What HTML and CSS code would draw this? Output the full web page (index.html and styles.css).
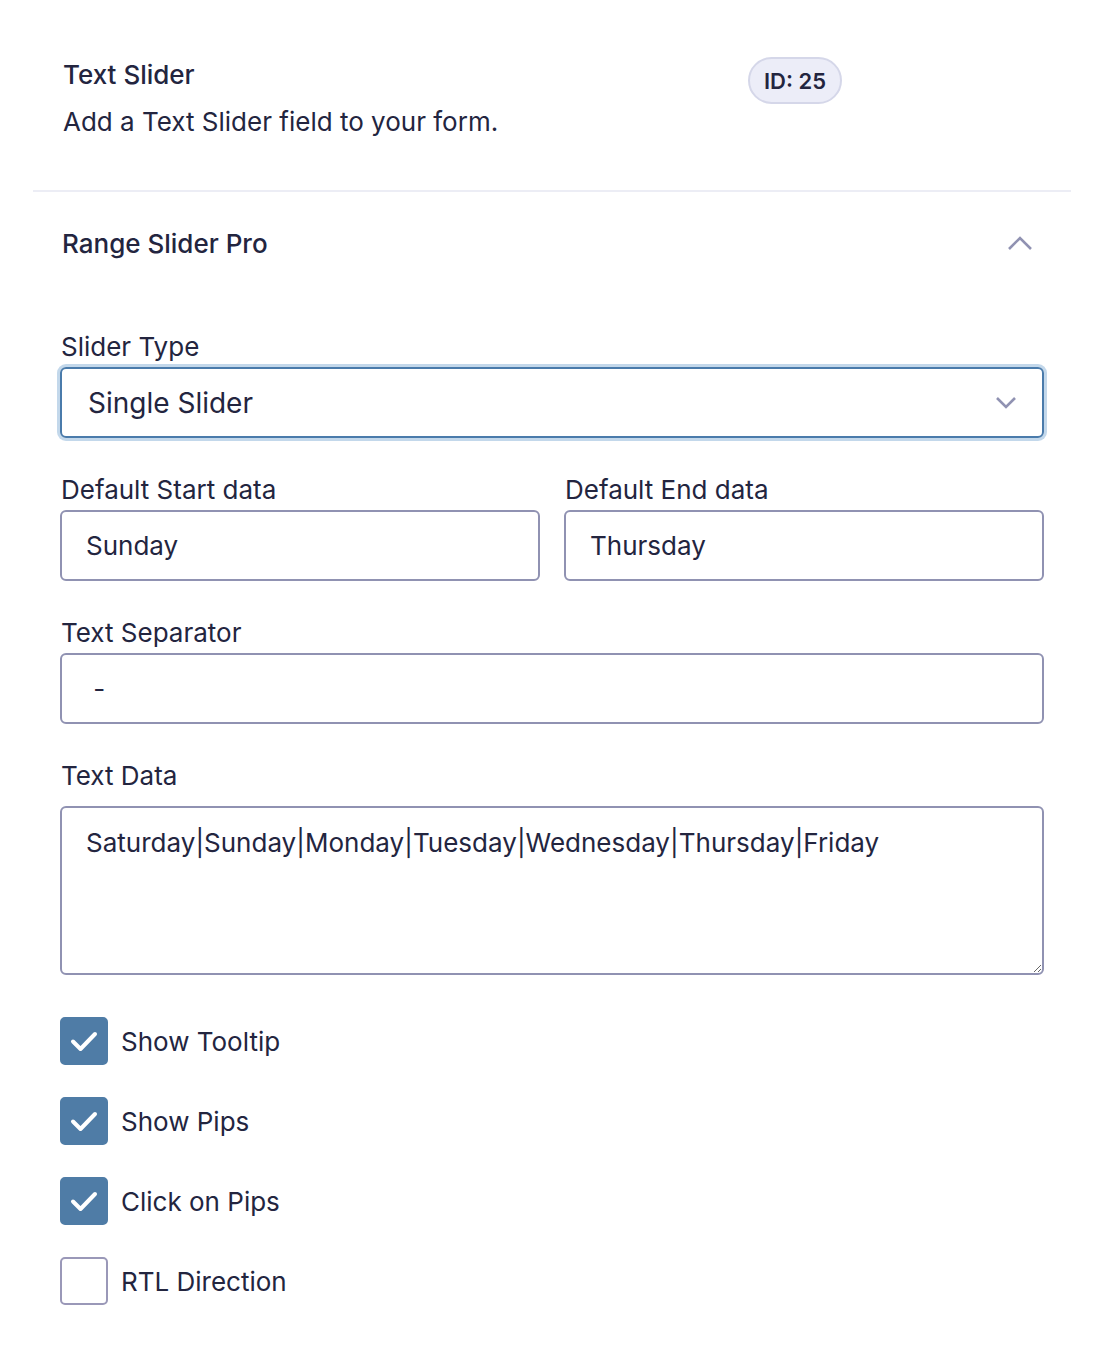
FILE: index.html
```html
<!DOCTYPE html>
<html lang="en">
<head>
<meta charset="utf-8">
<title>Text Slider</title>
<link rel="stylesheet" href="styles.css">
</head>
<body>
<div class="panel">
  <div class="field-head">
    <div class="field-info">
      <div class="field-title">Text Slider</div>
      <div class="field-desc">Add a Text Slider field to your form.</div>
    </div>
    <div class="badge">ID: 25</div>
  </div>
  <div class="section">
    <div class="section-head">
      <span class="section-title">Range Slider Pro</span>
      <svg class="chev-up" width="26" height="16" viewBox="0 0 26 16"><path d="M2 14 L13 3 L24 14" fill="none" stroke="#9092b2" stroke-width="2.6"/></svg>
    </div>
    <div class="section-body">
      <div class="field">
        <label class="label">Slider Type</label>
        <div class="select">
          <span>Single Slider</span>
          <svg width="22" height="14" viewBox="0 0 22 14"><path d="M2 2 L11 11 L20 2" fill="none" stroke="#9092b2" stroke-width="2.6"/></svg>
        </div>
      </div>
      <div class="row">
        <div class="field">
          <label class="label">Default Start data</label>
          <input class="input" type="text" value="Sunday">
        </div>
        <div class="field">
          <label class="label">Default End data</label>
          <input class="input" type="text" value="Thursday">
        </div>
      </div>
      <div class="field">
        <label class="label">Text Separator</label>
        <input class="input" type="text" value=" -">
      </div>
      <div class="field">
        <label class="label label-ta">Text Data</label>
        <textarea class="textarea">Saturday|Sunday|Monday|Tuesday|Wednesday|Thursday|Friday</textarea>
      </div>
      <div class="checks">
        <div class="check">
          <span class="box checked"><svg width="48" height="48" viewBox="0 0 48 48"><path d="M13 24.5 L20.5 32 L35 17" fill="none" stroke="#fff" stroke-width="4" stroke-linecap="round" stroke-linejoin="round"/></svg></span>
          <span class="check-label">Show Tooltip</span>
        </div>
        <div class="check">
          <span class="box checked"><svg width="48" height="48" viewBox="0 0 48 48"><path d="M13 24.5 L20.5 32 L35 17" fill="none" stroke="#fff" stroke-width="4" stroke-linecap="round" stroke-linejoin="round"/></svg></span>
          <span class="check-label">Show Pips</span>
        </div>
        <div class="check">
          <span class="box checked"><svg width="48" height="48" viewBox="0 0 48 48"><path d="M13 24.5 L20.5 32 L35 17" fill="none" stroke="#fff" stroke-width="4" stroke-linecap="round" stroke-linejoin="round"/></svg></span>
          <span class="check-label">Click on Pips</span>
        </div>
        <div class="check">
          <span class="box"></span>
          <span class="check-label">RTL Direction</span>
        </div>
      </div>
    </div>
  </div>
</div>
</body>
</html>
```
FILE: styles.css
```css
* { box-sizing: border-box; }
html, body { margin: 0; padding: 0; background: #fff; }
body {
  font-family: Inter, "Noto Sans", sans-serif;
  color: #23253f;
}
.panel {
  margin-left: 33px;
  width: 1038px;
}
.field-head {
  display: flex;
  align-items: flex-start;
  padding: 57px 0 53px 30px;
  border-bottom: 2px solid #ecedf5;
}
.field-info {
  flex: 0 0 685px;
  padding-top: 2px;
}
.field-title {
  font-size: 26px;
  line-height: 31px;
  font-weight: 500;
}
.field-desc {
  margin-top: 16px;
  font-size: 26px;
  line-height: 31px;
}
.badge {
  height: 47px;
  padding: 0 14px;
  display: flex;
  align-items: center;
  border-radius: 24px;
  background: #ecedf8;
  border: 2px solid #d5d7e9;
  font-size: 22px;
  font-weight: 600;
}
.section-head {
  display: flex;
  justify-content: space-between;
  align-items: center;
  padding: 36px 38px 0 29px;
  height: 66px;
}
.section-title {
  font-size: 26px;
  line-height: 31px;
  font-weight: 500;
}
.section-body {
  padding: 74px 27px 0 27px;
  display: flex;
  flex-direction: column;
  gap: 37px;
}
.field {
  display: flex;
  flex-direction: column;
  min-width: 0;
}
.label {
  font-size: 26px;
  line-height: 30px;
  margin-bottom: 5px;
  padding-left: 1px;
}
.label-ta { margin-bottom: 15px; }
.row {
  display: grid;
  grid-template-columns: 1fr 1fr;
  gap: 24px;
}
.select {
  height: 71px;
  border: 2px solid #4a7bab;
  border-radius: 6px;
  box-shadow: 0 0 0 3px #c3d8eb;
  display: flex;
  align-items: center;
  justify-content: space-between;
  padding: 0 25px 0 26px;
  font-size: 28px;
}
.input {
  height: 71px;
  width: 100%;
  border: 2px solid #9092b2;
  border-radius: 6px;
  padding: 0 24px;
  font-family: Inter, "Noto Sans", sans-serif;
  font-size: 26px;
  color: #23253f;
  background: #fff;
  outline: none;
}
.textarea {
  display: block;
  width: 100%;
  height: 169px;
  border: 2px solid #9092b2;
  border-radius: 6px;
  padding: 18px 24px;
  font-family: Inter, "Noto Sans", sans-serif;
  font-size: 26px;
  line-height: 33px;
  color: #23253f;
  background: #fff;
  outline: none;
}
.checks {
  margin-top: 5px;
  display: flex;
  flex-direction: column;
  gap: 32px;
}
.check {
  display: flex;
  align-items: center;
  gap: 13px;
}
.box {
  width: 48px;
  height: 48px;
  border: 2px solid #9a98b8;
  border-radius: 5px;
  background: #fff;
  display: flex;
  align-items: center;
  justify-content: center;
  flex: 0 0 48px;
}
.box.checked {
  background: #4f7ca6;
  border-color: #4f7ca6;
}
.box svg { display: block; margin: -2px; }
.check-label {
  font-size: 26px;
  line-height: 31px;
}
```
